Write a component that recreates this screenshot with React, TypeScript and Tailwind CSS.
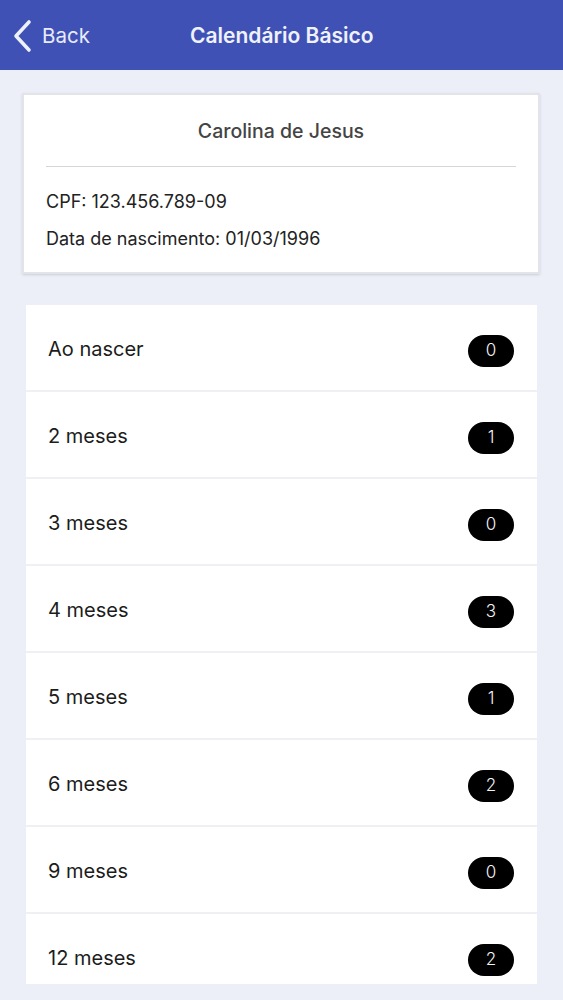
const doses = [
  { label: "Ao nascer", count: 0 },
  { label: "2 meses", count: 1 },
  { label: "3 meses", count: 0 },
  { label: "4 meses", count: 3 },
  { label: "5 meses", count: 1 },
  { label: "6 meses", count: 2 },
  { label: "9 meses", count: 0 },
  { label: "12 meses", count: 2 },
];

const App: React.FC = () => {
  return (
    <div className="h-[1000px] bg-[#eceef8] flex flex-col overflow-hidden font-['Inter',sans-serif]">
      <header className="h-[70px] bg-[#3f51b5] flex items-center text-white shrink-0">
        <div className="flex items-center w-[190px] pl-[12px] pt-[2px]">
          <svg width="20" height="34" viewBox="0 0 20 34" fill="none">
            <path
              d="M17 3 L4 17 L17 31"
              stroke="#eef0fa"
              strokeWidth="3.6"
              strokeLinecap="round"
              strokeLinejoin="round"
            />
          </svg>
          <span className="text-[20.5px] ml-[10px] text-[#e8ebf8]">Back</span>
        </div>
        <h1 className="text-[21px] font-semibold text-[#f0f2fb] pt-[2px]">
          Calendário Básico
        </h1>
      </header>

      <div className="mx-[22px] mt-[23px] w-[518px] h-[181px] bg-white border-2 border-[#e2e4ea] shadow-sm flex flex-col px-[22px]">
        <h2 className="text-[19.5px] font-medium text-[#444] text-center pt-[22px] pb-[20px]">
          Carolina de Jesus
        </h2>
        <div className="h-px bg-[#d6d6d6]" />
        <p className="text-[18px] text-[#222] mt-[21px]">CPF: 123.456.789-09</p>
        <p className="text-[18px] text-[#222] mt-[10px]">
          Data de nascimento: 01/03/1996
        </p>
      </div>

      <ul className="mx-[26px] mt-[31px] w-[511px] h-[679px] overflow-hidden flex flex-col gap-[2px] bg-[#eff0f3]">
        {doses.map((d) => (
          <li
            key={d.label}
            className="h-[85px] shrink-0 bg-white flex items-center justify-between pl-[22px] pr-[23px]"
          >
            <span className="text-[20px] text-[#1c1c1c] mt-[2px]">{d.label}</span>
            <span className="min-w-[46px] h-[32px] px-[16px] mt-[6px] rounded-full bg-black text-[#f4f4f4] text-[17px] font-light flex items-center justify-center">
              {d.count}
            </span>
          </li>
        ))}
      </ul>
    </div>
  );
};

export default App;
